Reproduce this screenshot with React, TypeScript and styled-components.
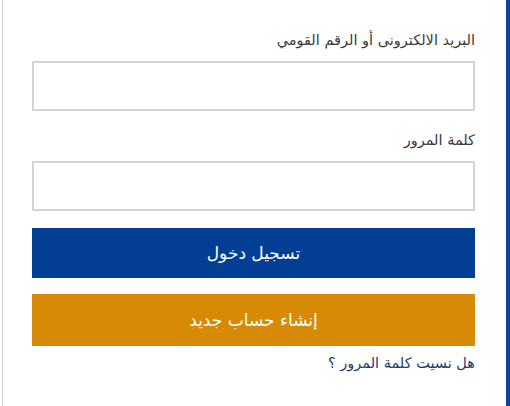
import styled, { createGlobalStyle } from "styled-components";

const GlobalStyle = createGlobalStyle`
  html, body {
    margin: 0;
    padding: 0;
    background: #ffffff;
  }
`;

const Panel = styled.div`
  box-sizing: border-box;
  width: 508px;
  height: 406px;
  margin-left: 2px;
  border-left: 1px solid #d0d0d0;
  border-right: 4px solid #0a40a8;
  padding: 28px 31px 0 29px;
  direction: rtl;
  font-family: "DejaVu Sans", "Noto Sans", sans-serif;
`;

const Form = styled.form`
  display: flex;
  flex-direction: column;
`;

const Field = styled.div`
  display: flex;
  flex-direction: column;
  margin-bottom: 17px;
`;

const Label = styled.label`
  font-size: 14.5px;
  line-height: 24px;
  color: #3a3a3a;
  margin-bottom: 9px;
`;

const Input = styled.input`
  box-sizing: border-box;
  height: 50px;
  width: 100%;
  border: 2px solid #d4d4d6;
  background: #fff;
  outline: none;
`;

const Button = styled.button<{ $tone: "primary" | "accent" }>`
  box-sizing: border-box;
  height: ${(p) => (p.$tone === "primary" ? "50px" : "52px")};
  border: none;
  width: 100%;
  color: #ffffff;
  font-family: inherit;
  font-size: 17px;
  background: ${(p) => (p.$tone === "primary" ? "#023e94" : "#d68a06")};
  margin-bottom: ${(p) => (p.$tone === "primary" ? "16px" : "5px")};
  cursor: pointer;
`;

const ForgotLink = styled.a`
  font-size: 14.5px;
  line-height: 24px;
  color: #1d3d70;
  text-decoration: none;
`;

export default function App() {
  return (
    <>
      <GlobalStyle />
      <Panel>
        <Form onSubmit={(e) => e.preventDefault()}>
          <Field>
            <Label>البريد الالكترونى أو الرقم القومي</Label>
            <Input type="text" />
          </Field>
          <Field>
            <Label>كلمة المرور</Label>
            <Input type="password" />
          </Field>
          <Button $tone="primary">تسجيل دخول</Button>
          <Button $tone="accent">إنشاء حساب جديد</Button>
          <ForgotLink href="#">هل نسيت كلمة المرور ؟</ForgotLink>
        </Form>
      </Panel>
    </>
  );
}
